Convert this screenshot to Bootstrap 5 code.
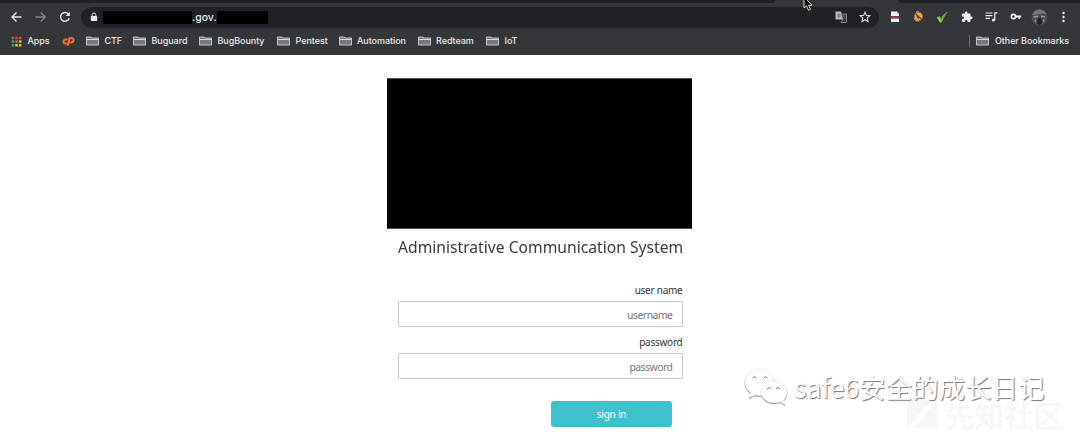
<!DOCTYPE html>
<html lang="en">
<head>
<meta charset="utf-8">
<title>Administrative Communication System</title>
<link href="https://cdn.jsdelivr.net/npm/bootstrap@5.3.0/dist/css/bootstrap.min.css" rel="stylesheet">
<style>
body{height:436px;overflow:hidden;background:#fff;font-family:"Noto Sans",sans-serif}
svg{display:block;flex:none}
.chrome{height:55px;background:#35363a;color:#e8eaed;font-family:Inter,sans-serif}
.tabstrip{height:3px}
.tabstrip i{background:#202124}
.tab-l{width:775px;border-bottom-right-radius:3px}
.tab-r{width:182px;border-bottom-left-radius:3px}
.toolbar{height:28px;padding-left:10px}
.omnibox{width:798px;height:21px;margin-left:10px;border-radius:11px;background:#202124;padding:0 8px 0 9px;font-size:10.5px}
.redact{background:#000;height:13px}
.host{width:25px;line-height:13px;white-space:nowrap;font-weight:500}
.bookmarks{height:20px;padding:0 11px;font-size:9px;line-height:20px;white-space:nowrap}
.bm{display:flex;align-items:center;gap:5.5px;height:20px}
.bm span{font-weight:500;letter-spacing:-.06px}
.login{width:305px;margin:23px 0 0 387px}
.banner{height:151px;background:#000;border:1px solid #555;border-width:1px 0}
.title-line{font-size:17px;line-height:24px;color:#3b3b3b;margin:6px 0 0;padding-left:10.5px;white-space:nowrap;font-weight:400}
.title-line span{display:inline-block;transform:scaleX(.921);transform-origin:left}
.fields{padding:0 9.500px 0 11px;text-align:right;font-size:10px;color:#333}
.fields label{display:block;height:16px;line-height:16px;letter-spacing:-.25px}
.fields .form-control{height:26px;border:1px solid #c8c8c8;border-radius:1px;padding:1px 9px 0;font-size:10.4px;letter-spacing:-.5px;text-align:right;color:#777}
.fields .form-control::placeholder{color:#777}
.signin{width:121px;height:26px;margin:22px 0 0 164px;padding:0;border:0;border-radius:3px;background:#3fc1cc;color:#fff;font-size:10px;line-height:26px;letter-spacing:-.2px}
.account{position:absolute;left:744px;top:367px;color:#fff;font:400 26.500px/40px "Noto Sans CJK SC",sans-serif;text-shadow:1px 1px 1px #777;white-space:nowrap}
.account svg{filter:drop-shadow(.7px 1px .5px #999)}
.community{position:absolute;left:907px;top:397px;color:#f6f6f6;font:500 29.500px/34px "Noto Sans CJK SC",sans-serif;white-space:nowrap}
.cursor{position:absolute;left:802px;top:-3px}
</style>
<script src="https://cdn.jsdelivr.net/npm/bootstrap@5.3.0/dist/js/bootstrap.bundle.min.js"></script>
</head>
<body>
<svg width="0" height="0" class="position-absolute"><defs><symbol id="folder" viewBox="0 0 13 10"><path d="M.5 9V1h4.500l1 1h6.500v7z" fill="#77787b" stroke="#c4c5c8" stroke-width="1"/><path d="M1 3.500h11.500" stroke="#d5d6d8" stroke-width="1"/></symbol></defs></svg>
<header class="chrome">
<div class="tabstrip d-flex justify-content-between"><i class="tab-l"></i><i class="tab-r"></i></div>
<div class="toolbar d-flex align-items-center">
<svg width="13" height="12" viewBox="0 0 13 12" fill="none" stroke="#e8eaed" stroke-width="1.4"><path d="M11.5 6H2.2M6.5 1.5L2 6l4.500 4.500"/></svg>
<svg style="margin-left:12px" width="12" height="12" viewBox="0 0 12 12" fill="none" stroke="#85868a" stroke-width="1.3"><path d="M.5 6h9.500M5.700 1.500L10.200 6l-4.500 4.500"/></svg>
<svg style="margin-left:12px" width="12" height="12" viewBox="0 0 12 12" fill="none" stroke="#e8eaed" stroke-width="1.4"><path d="M10.200 7.200A4.400 4.400 0 1 1 9.300 3"/><path d="M10.900 .7v4.200H6.700z" fill="#e8eaed" stroke="none"/></svg>
<div class="omnibox d-flex align-items-center">
<svg width="8" height="10" viewBox="0 0 8 10"><rect x=".8" y="4" width="6.400" height="5" rx=".8" fill="#e8eaed"/><path d="M2.200 4.300V2.800a1.800 1.800 0 0 1 3.600 0v1.500" fill="none" stroke="#e8eaed"/></svg>
<i class="redact" style="width:89px;margin-left:5px"></i><span class="host">.gov.</span><i class="redact" style="width:51px"></i>
<svg class="ms-auto" width="12" height="12" viewBox="0 0 12 12"><path d="M.5 .5h5.500l2.200 8H.5z" fill="#b9babd"/><path d="M6.500 3h5v8.500H6l1.800-3z" fill="#333438" stroke="#9b9ca0" stroke-width=".8"/><path d="M5.500 3.300H3v2.500h2.200V4.800H4M8 5h3M9.500 4.300V5M8.300 5.300l2.200 3M10.500 5.300L8.300 8.500" fill="none" stroke="#606166" stroke-width=".8"/></svg>
<svg style="margin-left:12px" width="12" height="12" viewBox="0 0 12 12" fill="none" stroke="#d5d6d8" stroke-width="1.100"><path d="M6 1.200l1.400 3.200 3.500.3-2.700 2.300.8 3.500L6 8.700l-3 1.800.8-3.500L1.100 4.700l3.500-.3z"/></svg>
</div>
<svg style="margin-left:10px" width="12" height="12" viewBox="0 0 12 12"><path d="M2 .5h6l2 2V11H2z" fill="#eee"/><path d="M8 .5v2h2" fill="#999"/><path d="M.8 5h10.400v2.600H.8z" fill="#6f3033"/><path d="M2.500 6.300h7" stroke="#a67a7c" stroke-width=".6"/></svg>
<svg style="margin-left:12px" width="11" height="12" viewBox="0 0 11 12"><circle cx="5.500" cy="5.500" r="4.500" fill="#efa34b" stroke="#463020" stroke-width=".7"/><path d="M2.500 2.800l6 5.400M4 5.500l2 2" stroke="#69401e" stroke-width="1.200"/><path d="M.9 6.800a4.700 4.700 0 0 0 5 3.200M3 1.300a4.700 4.700 0 0 1 3-.5" stroke="#ddd" stroke-width=".8" fill="none"/></svg>
<svg style="margin-left:12px" width="13" height="12" viewBox="0 0 13 12"><path d="M.8 6.200l2.800-1.200 1.500 2.200Q7.500 2.500 12 .5 8.500 5 5.600 11.300H4z" fill="#60b83f"/><path d="M.8 6.200L4 11.300h1.600L3 6.500z" fill="#a4d93d"/></svg>
<svg style="margin-left:12px" width="12" height="12" viewBox="0 0 24 24" fill="#f1f3f4"><path d="M20.500 11H19V7a2 2 0 0 0-2-2h-4V3.500a2.500 2.500 0 0 0-5 0V5H4a2 2 0 0 0-2 2v3.800h1.500a2.700 2.700 0 0 1 0 5.400H2V20a2 2 0 0 0 2 2h3.800v-1.500a2.700 2.700 0 0 1 5.400 0V22H17a2 2 0 0 0 2-2v-4h1.500a2.500 2.500 0 0 0 0-5"/></svg>
<svg style="margin-left:12px" width="13" height="12" viewBox="0 0 13 12" fill="none" stroke="#e8eaed" stroke-width="1.200"><path d="M.5 2h7M.5 4.700h7M.5 7.400h4.500M9.800 9V1.800h2.700"/><circle cx="8.500" cy="9" r="1.600" fill="#e8eaed" stroke="none"/></svg>
<svg style="margin-left:12px" width="12" height="12" viewBox="0 0 12 12"><circle cx="3.500" cy="5.500" r="2.100" fill="none" stroke="#f1f3f4" stroke-width="1.700"/><path d="M6 5.500h5.200M9.300 5.500v2.500" stroke="#f1f3f4" stroke-width="1.800"/></svg>
<svg style="margin-left:9px" width="17" height="17" viewBox="0 0 17 17"><circle cx="8.500" cy="8.500" r="8" fill="#4c4d4d"/><path d="M1 6q3-6 8-5.500 5 .5 6.500 5-3-1.500-7-.5T1 6" fill="#777"/><path d="M2 7.500l5-1v1.800l-4 .5zM10 6.500l4 .8v1l-4-.3z" fill="#a0a0a0"/><path d="M7 9h3l1 5-2 2-3-1z" fill="#202020"/><path d="M3 12l2-2v4M12 10l2 1-2 3" fill="#888"/></svg>
<svg style="margin-left:13px" width="5" height="12" viewBox="0 0 5 12" fill="#e8eaed"><circle cx="2.500" cy="2" r="1.200"/><circle cx="2.500" cy="6" r="1.200"/><circle cx="2.500" cy="10" r="1.200"/></svg>
</div>
<nav class="bookmarks d-flex align-items-center">
<div class="bm" style="width:51px"><svg width="11" height="11" viewBox="0 0 11 11"><path d="M.7.700h2.500v2.500H.7zM4.300.7h2.500v2.500H4.300zM7.900.7h2.500v2.500H7.900z" fill="#ea4335"/><path d="M.7 4.300h2.500v2.500H.7zM.7 7.900h2.500v2.500H.7z" fill="#34a853"/><path d="M4.300 4.300h2.500v2.500H4.300z" fill="#4285f4"/><path d="M7.900 4.300h2.500v2.500H7.900zM4.300 7.900h2.500v2.500H4.300zM7.900 7.900h2.500v2.500H7.900z" fill="#fbbc04"/></svg><span>Apps</span></div>
<div class="bm" style="width:24px"><svg width="13" height="11" viewBox="0 0 13 11" fill="none" stroke="#ff6c2c" stroke-width="2"><path d="M5.500 3.500H3.800q-2 0-2.300 2t1.800 2h1.400M5.600 9.800L7.500 2.300h2.200q2 0 1.900 1.800-.3 2.400-2.600 2.400H7.500"/></svg></div>
<div class="bm" style="width:47px"><svg width="13" height="10"><use href="#folder"/></svg><span>CTF</span></div>
<div class="bm" style="width:66px"><svg width="13" height="10"><use href="#folder"/></svg><span>Buguard</span></div>
<div class="bm" style="width:78px"><svg width="13" height="10"><use href="#folder"/></svg><span>BugBounty</span></div>
<div class="bm" style="width:61.500px"><svg width="13" height="10"><use href="#folder"/></svg><span>Pentest</span></div>
<div class="bm" style="width:79px"><svg width="13" height="10"><use href="#folder"/></svg><span>Automation</span></div>
<div class="bm" style="width:68.500px"><svg width="13" height="10"><use href="#folder"/></svg><span>Redteam</span></div>
<div class="bm"><svg width="13" height="10"><use href="#folder"/></svg><span>IoT</span></div>
<div class="bm ms-auto"><svg width="2" height="12"><path d="M.5 0v12" stroke="#6d6e72"/></svg><svg width="13" height="10"><use href="#folder"/></svg><span>Other Bookmarks</span></div>
</nav>
</header>
<main class="login">
<div class="banner"></div>
<h1 class="title-line"><span>Administrative Communication System</span></h1>
<form class="fields">
<label for="user" style="margin-top:23px;margin-bottom:3px">user name</label>
<input id="user" class="form-control" placeholder="username">
<label for="pass" style="margin-top:7px;margin-bottom:3px">password</label>
<input id="pass" class="form-control" placeholder="password">
</form>
<button class="btn signin" type="button">sign in</button>
</main>
<div class="community d-flex align-items-center"><svg width="38" height="30" viewBox="0 0 38 30"><path d="M0 1h25L0 29zM30 1v27H8z" fill="#f6f6f6"/></svg><span>先知社区</span></div>
<div class="account d-flex align-items-center"><svg width="46" height="40" viewBox="0 0 46 40" fill="#fff" stroke="#ccc" stroke-width=".4"><path d="M16 2C7 2 1 8 1 15c0 5 2.500 8.500 6 11l-2 5 6-3c3 1 6 1 9 .5L30 13C28 6 23 2 16 2z"/><path d="M30 14c-7 0-13 5-13 11s6 11 13 11c2 0 4-.4 6-1l5 3-1.500-4.500C42 31 43 28 43 25c0-6-6-11-13-11z"/><path d="M8.500 11q2-3 4 0M19.500 11q2-3 4 0M23 22q2-3 4 0M32 22q2-3 4 0" fill="none" stroke="#777" stroke-width="1"/></svg><span class="ms-1">safe6安全的成长日记</span></div>
<svg class="cursor" width="11" height="15" viewBox="0 0 11 15"><path d="M2 0v11l2.500-2.200 2 4.500 2-1-2-4.200H10z" fill="#000" stroke="#ddd" stroke-width="1"/></svg>
</body>
</html>
